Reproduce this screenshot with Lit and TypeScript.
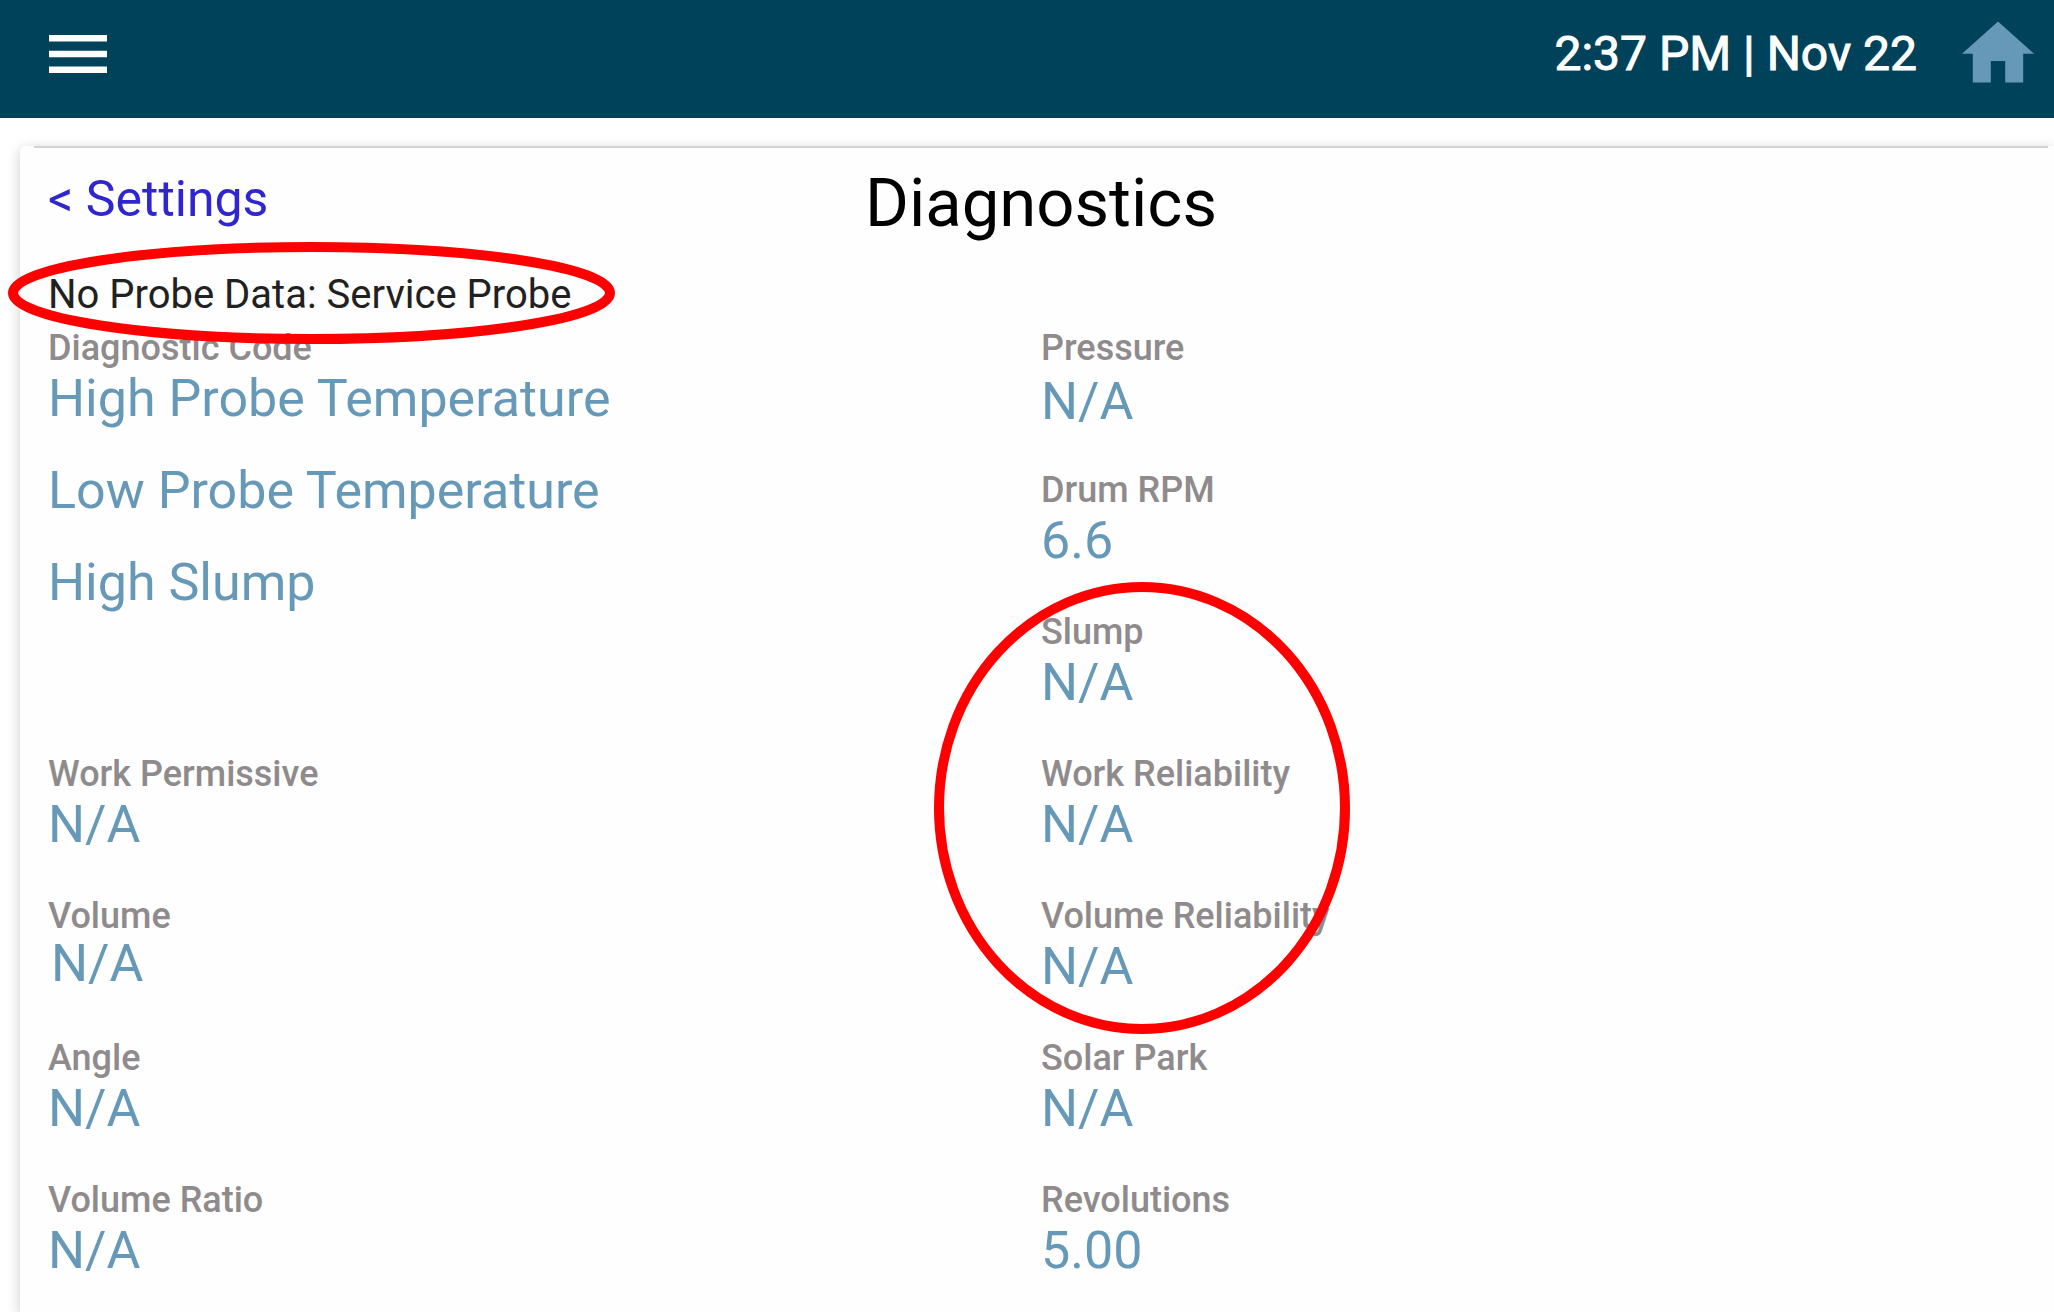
import { LitElement, html, css } from "lit";
import { customElement, property } from "lit/decorators.js";
import { classMap } from "lit/directives/class-map.js";

interface Reading {
  label: string;
  values: string[];
  variant?: "tall" | "lowered" | "inset";
}

const LEFT: Reading[] = [
  {
    label: "Diagnostic Code",
    values: ["High Probe Temperature", "Low Probe Temperature", "High Slump"],
    variant: "tall",
  },
  { label: "Work Permissive", values: ["N/A"] },
  { label: "Volume", values: ["N/A"], variant: "inset" },
  { label: "Angle", values: ["N/A"] },
  { label: "Volume Ratio", values: ["N/A"] },
];

const RIGHT: Reading[] = [
  { label: "Pressure", values: ["N/A"], variant: "lowered" },
  { label: "Drum RPM", values: ["6.6"] },
  { label: "Slump", values: ["N/A"] },
  { label: "Work Reliability", values: ["N/A"] },
  { label: "Volume Reliability", values: ["N/A"] },
  { label: "Solar Park", values: ["N/A"] },
  { label: "Revolutions", values: ["5.00"] },
];

@customElement("top-bar")
class TopBar extends LitElement {
  @property() time = "";
  @property() date = "";

  static styles = css`
    :host {
      display: flex;
      align-items: center;
      height: 118px;
      box-sizing: border-box;
      padding: 0 20px 10px 49px;
      background: #004259;
      color: #fff;
    }
    .menu {
      display: flex;
      padding: 0;
      border: 0;
      background: none;
      color: inherit;
      cursor: pointer;
    }
    .menu-icon {
      width: 58px;
      height: 38px;
      fill: currentColor;
    }
    .clock {
      margin: 0 45px 0 auto;
      font-size: 48px;
      line-height: 56px;
      -webkit-text-stroke: 1px currentColor;
    }
    .home {
      display: flex;
      margin-bottom: 4px;
      color: #6698b7;
    }
    .home-icon {
      width: 72px;
      height: 62px;
      fill: currentColor;
    }
  `;

  render() {
    return html`
      <button class="menu" type="button" aria-label="Menu">
        <svg class="menu-icon" viewBox="0 0 58 38" aria-hidden="true">
          <path d="M0 0h58v6.4H0zM0 15.8h58v6.4H0zM0 31.6h58V38H0z" />
        </svg>
      </button>
      <span class="clock">${this.time} | ${this.date}</span>
      <a class="home" href="#home" aria-label="Home">
        <svg class="home-icon" viewBox="2 3 20 17" aria-hidden="true">
          <path d="M10 20v-6h4v6h5v-8h3L12 3 2 12h3v8z" />
        </svg>
      </a>
    `;
  }
}

@customElement("reading-list")
class ReadingList extends LitElement {
  @property({ attribute: false }) readings: Reading[] = [];

  static styles = css`
    .list {
      display: flex;
      flex-direction: column;
      gap: 40px;
      margin: 0;
    }
    .reading {
      min-height: 102px;
    }
    .tall {
      min-height: 386px;
    }
    .label {
      font-size: 36px;
      line-height: 40px;
      font-weight: 500;
      color: #8f8b8c;
    }
    .value {
      margin: 0;
      font-size: 52px;
      line-height: 62px;
      color: #6698b7;
    }
    .value + .value {
      margin-top: 30px;
    }
    .lowered .value {
      line-height: 68px;
      margin-bottom: -6px;
    }
    .inset .value {
      line-height: 56px;
      padding-left: 3px;
    }
  `;

  render() {
    return html`
      <dl class="list">
        ${this.readings.map(
          (r) => html`
            <div
              class=${classMap({
                reading: true,
                tall: r.variant === "tall",
                lowered: r.variant === "lowered",
                inset: r.variant === "inset",
              })}
            >
              <dt class="label">${r.label}</dt>
              ${r.values.map((v) => html`<dd class="value">${v}</dd>`)}
            </div>
          `
        )}
      </dl>
    `;
  }
}

@customElement("app-root")
class AppRoot extends LitElement {
  static styles = css`
    :host {
      display: flex;
      flex-direction: column;
      min-height: 100vh;
      overflow: clip;
      background: #fff;
      font-family: Roboto, "Liberation Sans", sans-serif;
    }
    .panel {
      flex: 1;
      margin: 28px 0 0 20px;
      border-radius: 5px 0 0 0;
      background: #fefefe;
      box-shadow: 0 3px 14px rgba(0, 0, 0, 0.2);
    }
    .rule {
      height: 2px;
      margin: 0 6px 0 14px;
      border: 0;
      background: #d2d2d2;
    }
    .content {
      padding: 16px 20px 0 28px;
    }
    .heading {
      display: grid;
      grid-template-columns: 1fr auto 1fr;
      align-items: start;
    }
    .back {
      justify-self: start;
      font-size: 50px;
      line-height: 70px;
      color: #3026d0;
      text-decoration: none;
    }
    .title {
      margin: 0;
      font-size: 67px;
      line-height: 78px;
      font-weight: 400;
      color: #000;
    }
    .alert {
      position: relative;
      z-index: 1;
      width: fit-content;
      margin: 28px 0 8px;
      font-size: 40px;
      line-height: 50px;
      color: #212121;
    }
    .columns {
      display: grid;
      grid-template-columns: 1fr 1fr;
    }
    .column {
      position: relative;
    }
    .mark {
      position: absolute;
      fill: none;
      stroke: #f00;
      stroke-width: 10px;
      pointer-events: none;
    }
    .mark-alert {
      left: -40px;
      top: -28px;
      width: 607px;
      height: 102px;
    }
    .mark-readings {
      left: -107px;
      top: 254px;
      width: 416px;
      height: 452px;
    }
  `;

  render() {
    return html`
      <top-bar time="2:37 PM" date="Nov 22"></top-bar>
      <main class="panel">
        <hr class="rule" />
        <div class="content">
          <div class="heading">
            <a class="back" href="#settings">&lt; Settings</a>
            <h1 class="title">Diagnostics</h1>
          </div>
          <p class="alert">
            No Probe Data: Service Probe
            <svg class="mark mark-alert" viewBox="0 0 607 102" aria-hidden="true">
              <ellipse cx="303.5" cy="51" rx="298.5" ry="46" />
            </svg>
          </p>
          <div class="columns">
            <reading-list .readings=${LEFT}></reading-list>
            <div class="column">
              <reading-list .readings=${RIGHT}></reading-list>
              <svg class="mark mark-readings" viewBox="0 0 416 452" aria-hidden="true">
                <ellipse cx="208" cy="226" rx="203" ry="221" />
              </svg>
            </div>
          </div>
        </div>
      </main>
    `;
  }
}
